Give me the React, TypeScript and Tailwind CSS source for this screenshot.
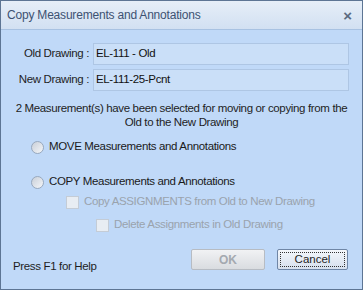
import React from 'react'

const font = { fontFamily: '"Liberation Sans", Arial, sans-serif' }

const Radio = ({ label }: { label: string }) => (
  <div className="flex h-[14px] items-center gap-[5px]">
    <span className="h-[13px] w-[13px] rounded-full border border-[#98a8bd] bg-gradient-to-br from-[#c9cfd8] to-[#f4f6f9]" />
    <span className="text-[11.5px] tracking-[-0.35px] text-[#1a1a1a]">{label}</span>
  </div>
)

const Check = ({ label }: { label: string }) => (
  <div className="flex h-[14px] items-center gap-[5px]">
    <span className="h-[13px] w-[13px] border border-[#c4ccd6] bg-[#e8edf3]" />
    <span className="text-[11.5px] tracking-[-0.35px] text-[#9aa3ad]">{label}</span>
  </div>
)

const Field = ({ label, value }: { label: string; value: string }) => (
  <div className="flex items-center">
    <span className="w-[92px] pr-[4px] text-right text-[11.5px] tracking-[-0.35px] text-[#1e1e1e]">{label}</span>
    <div className="flex h-[22px] w-[256px] items-center border border-[#aec6e4] bg-[#cadff8] px-[2px] text-[11.5px] tracking-[-0.35px] text-[#111]">
      {value}
    </div>
  </div>
)

export default function App() {
  return (
    <div style={font} className="flex h-[290px] w-[363px] flex-col border border-[#5d7594] bg-[#c0d9f8]">
      {/* title bar */}
      <div className="flex h-[29px] shrink-0 items-center justify-between border-b border-[#a8c2e2] bg-gradient-to-b from-[#e6eef8] to-[#d2e0f2] pl-[6px] pr-[10px]">
        <span className="text-[12px] tracking-[-0.2px] text-[#3d5272]">Copy Measurements and Annotations</span>
        <span className="text-[15px] font-bold leading-none text-[#5a6a80]">×</span>
      </div>

      <div className="flex flex-1 flex-col pt-[13px]">
        <div className="flex flex-col gap-[4px]">
          <Field label="Old Drawing :" value="EL-111 - Old" />
          <Field label="New Drawing :" value="EL-111-25-Pcnt" />
        </div>

        <p className="mt-[10px] text-center text-[11.5px] leading-[14px] tracking-[-0.35px] text-[#1e1e1e]">
          2 Measurement(s) have been selected for moving or copying from the
          <br />
          Old to the New Drawing
        </p>

        <div className="mt-[11px] flex flex-col pl-[30px]">
          <Radio label="MOVE Measurements and Annotations" />
          <div className="mt-[21px]">
            <Radio label="COPY Measurements and Annotations" />
          </div>
          <div className="mt-[6px] pl-[35px]">
            <Check label="Copy ASSIGNMENTS from Old to New Drawing" />
          </div>
          <div className="mt-[9px] pl-[65px]">
            <Check label="Delete Assignments in Old Drawing" />
          </div>
        </div>

        <div className="mt-auto flex items-center justify-between pb-[14px] pl-[12px] pr-[14px]">
          <span className="mt-[13px] text-[11.5px] tracking-[-0.35px] text-[#1e1e1e]">Press F1 for Help</span>
          <div className="flex gap-[12px]">
            <button className="h-[21px] w-[74px] rounded-[2px] border border-[#b7bcc3] bg-gradient-to-b from-[#f1f2f4] to-[#d9dce0] text-[12px] font-bold text-[#a4a9b0]">
              OK
            </button>
            <button className="h-[21px] w-[71px] rounded-[2px] border border-[#6f86a6] bg-gradient-to-b from-[#f4f7fb] to-[#d6e0ee] p-[2px] text-[11.5px] text-[#1e1e1e]">
              <span className="flex h-full w-full items-center justify-center border border-dotted border-[#333]">Cancel</span>
            </button>
          </div>
        </div>
      </div>
    </div>
  )
}
